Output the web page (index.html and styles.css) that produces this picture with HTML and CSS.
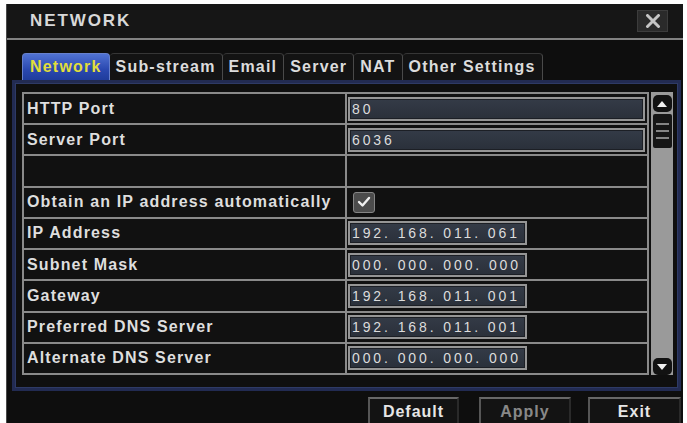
FILE: index.html
```html
<!DOCTYPE html>
<html lang="en">
<head>
<meta charset="utf-8">
<title>NETWORK</title>
<link rel="stylesheet" href="styles.css">
</head>
<body>
<div class="window">
  <div class="titlebar">
    <span class="title">NETWORK</span>
    <span class="close"><svg width="16" height="14" viewBox="0 0 16 14"><path d="M2.5 1.5 L13.5 12.5 M13.5 1.5 L2.5 12.5" stroke="#c4c4c4" stroke-width="3" stroke-linecap="round"/></svg></span>
  </div>
  <div class="tabs">
    <div class="tab active">Network</div>
    <div class="tab">Sub-stream</div>
    <div class="tab">Email</div>
    <div class="tab">Server</div>
    <div class="tab">NAT</div>
    <div class="tab">Other Settings</div>
  </div>
  <div class="panel">
    <div class="grid">
      <div class="row"><div class="label">HTTP Port</div><div class="value"><span class="field wide">80</span></div></div>
      <div class="row"><div class="label">Server Port</div><div class="value"><span class="field wide">6036</span></div></div>
      <div class="row"><div class="label"></div><div class="value"></div></div>
      <div class="row"><div class="label">Obtain an IP address automatically</div><div class="value"><span class="check"><svg width="14" height="12" viewBox="0 0 14 12"><path d="M2 6 L5.5 9.5 L12 2" fill="none" stroke="#f0f0f0" stroke-width="2.4" stroke-linecap="round" stroke-linejoin="round"/></svg></span></div></div>
      <div class="row"><div class="label">IP Address</div><div class="value"><span class="field ip">192. 168. 011. 061</span></div></div>
      <div class="row"><div class="label">Subnet Mask</div><div class="value"><span class="field ip">000. 000. 000. 000</span></div></div>
      <div class="row"><div class="label">Gateway</div><div class="value"><span class="field ip">192. 168. 011. 001</span></div></div>
      <div class="row"><div class="label">Preferred DNS Server</div><div class="value"><span class="field ip">192. 168. 011. 001</span></div></div>
      <div class="row"><div class="label">Alternate DNS Server</div><div class="value"><span class="field ip">000. 000. 000. 000</span></div></div>
    </div>
    <div class="scrollbar">
      <div class="sb-btn"><svg width="12" height="8" viewBox="0 0 12 8"><path d="M1 7 L6 1 L11 7 Z" fill="#f0f0f0"/></svg></div>
      <div class="thumb"><i></i><i></i><i></i></div>
      <div class="track"></div>
      <div class="sb-btn"><svg width="12" height="8" viewBox="0 0 12 8"><path d="M1 1 L6 7 L11 1 Z" fill="#f0f0f0"/></svg></div>
    </div>
  </div>
  <div class="buttons">
    <div class="btn b-default">Default</div>
    <div class="btn b-apply disabled">Apply</div>
    <div class="btn b-exit">Exit</div>
  </div>
</div>
</body>
</html>
```

FILE: styles.css
```css
html, body {
  margin: 0;
  padding: 0;
  background: #ffffff;
}
body {
  padding: 4px 4px 0 6px;
  font-family: "Liberation Sans", Arial, sans-serif;
}
.window {
  width: 677px;
  height: 419px;
  background: #0e0e0e;
  border-left: 1px solid #4a4a4a;
  box-sizing: border-box;
  overflow: hidden;
  display: flex;
  flex-direction: column;
}
.titlebar {
  height: 34px;
  flex: none;
  background: #161616;
  border-bottom: 2px solid #828282;
  display: flex;
  align-items: center;
  justify-content: space-between;
  padding: 0 15px 0 23px;
}
.title {
  color: #d8d8d8;
  font-weight: bold;
  font-size: 17px;
  letter-spacing: 1.9px;
}
.close {
  width: 31px;
  height: 22px;
  box-sizing: border-box;
  background: #2a2a2a;
  border: 1px solid #3c3c3c;
  display: flex;
  align-items: center;
  justify-content: center;
}
.tabs {
  display: flex;
  margin: 13px 0 0 15px;
  height: 27px;
  flex: none;
}
.tab {
  padding: 0 6px;
  display: flex;
  align-items: center;
  color: #dcdcdc;
  font-weight: bold;
  font-size: 16px;
  letter-spacing: 1.2px;
  background: #131313;
  border-top: 1px solid #363636;
  border-right: 1px solid #4a4a4a;
  border-radius: 4px 4px 0 0;
  white-space: nowrap;
}
.tab.active {
  color: #e2de3a;
  background: linear-gradient(#5072d2, #2a48b0 60%, #1f3c9c);
  border: 1px solid #6680cc;
  border-bottom: none;
  padding: 0 7px;
}
.panel {
  flex: none;
  margin: 0 2px 0 5px;
  height: 311px;
  box-sizing: border-box;
  border: 3px solid #222b52;
  box-shadow: inset 0 0 0 1px #2e3a66;
  padding: 9px 5px 13px 7px;
  display: flex;
  gap: 2px;
  background: #0f0f0f;
}
.grid {
  width: 627px;
  border-top: 2px solid #8a8a8a;
  border-left: 2px solid #8a8a8a;
  box-sizing: border-box;
  display: flex;
  flex-direction: column;
}
.row {
  display: flex;
  height: 31.4px;
  box-sizing: border-box;
  border-bottom: 2px solid #8a8a8a;
  background: #111111;
}
.label {
  width: 323px;
  flex: none;
  box-sizing: border-box;
  border-right: 2px solid #8a8a8a;
  padding-left: 3px;
  display: flex;
  align-items: center;
  color: #dedede;
  font-weight: bold;
  font-size: 16px;
  letter-spacing: 1.15px;
  white-space: nowrap;
}
.value {
  flex: 1;
  border-right: 2px solid #8a8a8a;
  display: flex;
  align-items: center;
  padding-left: 1px;
}
.field {
  height: 24px;
  box-sizing: border-box;
  background: linear-gradient(#343b47, #2a303a);
  border: 2px solid #959595;
  box-shadow: inset 0 0 0 1px #1c1f25;
  color: #dcdcdc;
  font-size: 14px;
  letter-spacing: 2.9px;
  display: flex;
  align-items: center;
  padding-left: 2px;
  white-space: nowrap;
}
.field.wide {
  width: 297px;
}
.field.ip {
  width: 179px;
}
.check {
  margin-left: 5px;
  width: 22px;
  height: 21px;
  box-sizing: border-box;
  background: #4c4c4c;
  border: 1px solid #858585;
  border-radius: 3px;
  display: flex;
  align-items: center;
  justify-content: center;
}
.scrollbar {
  width: 22px;
  height: 283px;
  background: #9a9a9a;
  display: flex;
  flex-direction: column;
  align-items: center;
  padding: 3px 0 0;
  box-sizing: border-box;
}
.sb-btn {
  width: 19px;
  height: 17px;
  background: #121212;
  border-radius: 5px;
  display: flex;
  align-items: center;
  justify-content: center;
  flex: none;
}
.thumb {
  width: 19px;
  height: 34px;
  margin-top: 2px;
  background: #161616;
  border-radius: 2px;
  display: flex;
  flex-direction: column;
  justify-content: center;
  gap: 5px;
  flex: none;
}
.thumb i {
  display: block;
  height: 2px;
  margin: 0 3px;
  background: #858585;
}
.track {
  flex: 1;
}
.buttons {
  display: flex;
  justify-content: flex-end;
  margin-top: 6px;
  padding-right: 2px;
  height: 26px;
}
.btn {
  height: 28px;
  box-sizing: border-box;
  background: #131313;
  border-top: 2px solid #686868;
  border-left: 2px solid #565656;
  border-right: 2px solid #2a2a2a;
  color: #e6e6e6;
  font-weight: bold;
  font-size: 16px;
  letter-spacing: 1px;
  display: flex;
  align-items: center;
  justify-content: center;
}
.b-default { width: 91px; }
.b-apply { width: 92px; margin-left: 20px; }
.b-exit { width: 93px; margin-left: 17px; }
.btn.disabled { color: #888888; }
```
